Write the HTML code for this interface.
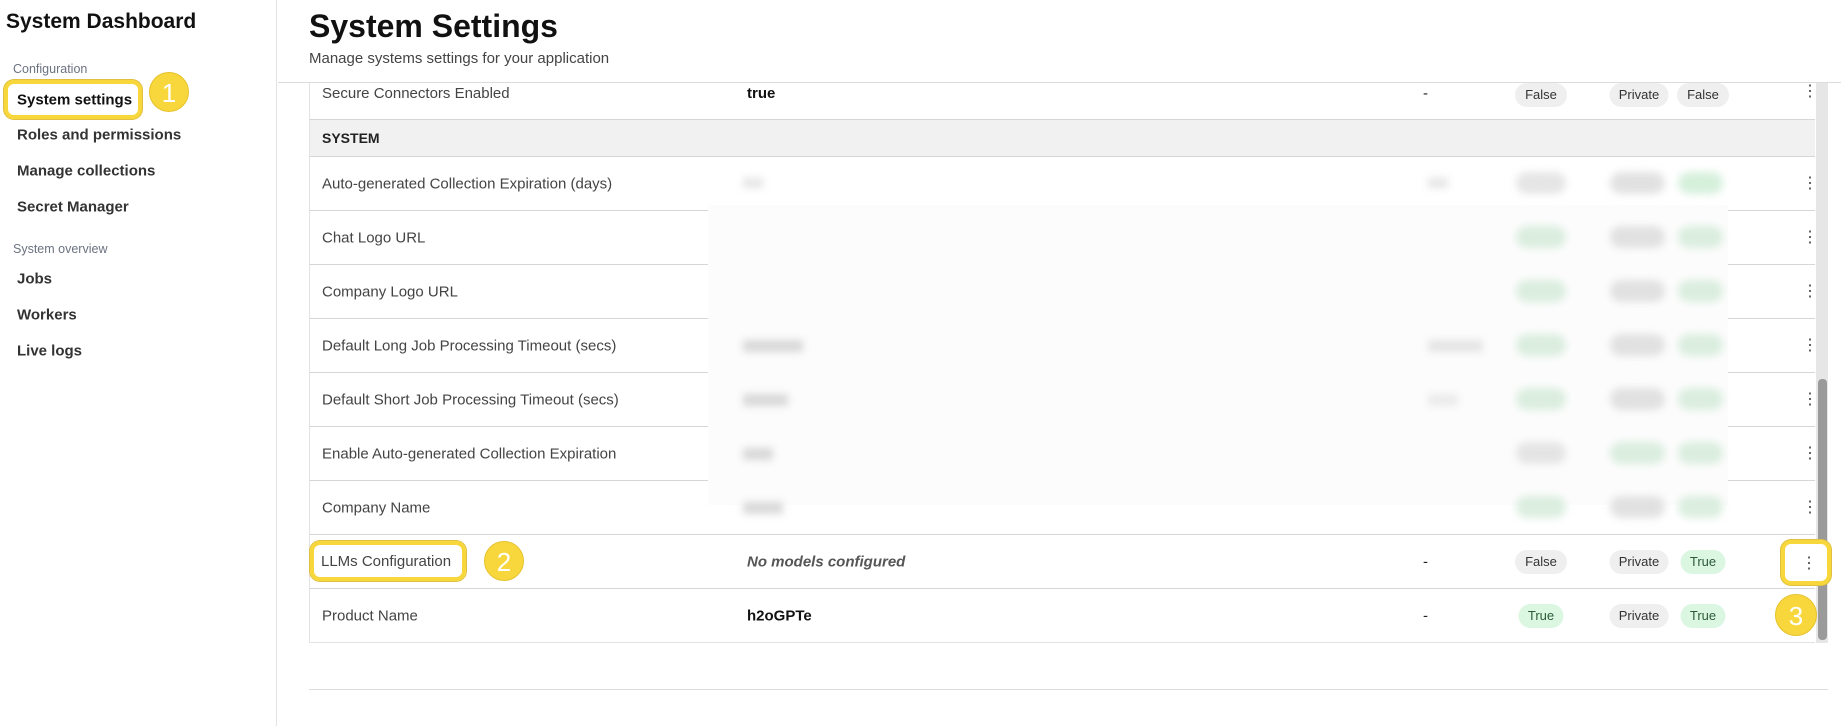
<!DOCTYPE html>
<html><head><meta charset="utf-8"><style>
*{box-sizing:border-box;margin:0;padding:0}
body{width:1841px;height:726px;overflow:hidden;background:#fff;font-family:"Liberation Sans",sans-serif;color:#222;position:relative}
.abs{position:absolute}
.side{left:0;top:0;width:277px;height:726px;border-right:1px solid #e3e3e3}
.nav{position:absolute;left:17px;font-size:15px;font-weight:bold;color:#333;transform:translateY(-50%)}
.sec{position:absolute;left:13px;font-size:12.5px;color:#6b7280;transform:translateY(-50%)}
.circ{position:absolute;width:40px;height:40px;border-radius:50%;background:#f8d73c;color:#fff;font-size:26px;text-align:center;line-height:40px;border:1px solid #e6c22c}
.hl{position:absolute;border:4px solid #f8d73c;border-radius:10px;box-shadow:0 0 0 1px #e0c040}
.row{position:absolute;left:309px;width:1506px;height:54px;border-bottom:1px solid #d6d6d6;border-left:1px solid #e3e3e3}
.c{position:absolute;top:50%;transform:translateY(-50%);font-size:15px;white-space:nowrap}
.pill{position:absolute;top:50%;height:24px;line-height:24px;border-radius:12px;font-size:13px;text-align:center;transform:translate(-50%,-50%);background:#efefef;color:#333}
.g{background:#dbf7e2;color:#2d5a38}
.dots{position:absolute;left:1492px;top:50%;transform:translateY(-50%);font-size:16px;color:#444;line-height:1}
.bp{position:absolute;height:22px;border-radius:11px}
</style></head><body>
<div class="abs side"></div>
<div class="abs" style="left:6px;top:10px;font-size:21px;font-weight:bold;color:#111">System Dashboard</div>
<div class="sec" style="top:69px">Configuration</div>
<div class="hl" style="left:4px;top:80px;width:138px;height:39px;background:#fff"></div>
<div class="nav" style="top:100px;color:#111">System settings</div>
<div class="circ" style="left:149px;top:72px">1</div>
<div class="nav" style="top:135px">Roles and permissions</div>
<div class="nav" style="top:171px">Manage collections</div>
<div class="nav" style="top:207px">Secret Manager</div>
<div class="sec" style="top:249px">System overview</div>
<div class="nav" style="top:279px">Jobs</div>
<div class="nav" style="top:315px">Workers</div>
<div class="nav" style="top:351px">Live logs</div>

<div class="abs" style="left:309px;top:8px;font-size:32px;font-weight:bold;color:#111">System Settings</div>
<div class="abs" style="left:309px;top:50px;font-size:15px;color:#444">Manage systems settings for your application</div>
<div class="abs" style="left:278px;top:82px;width:1563px;border-top:1px solid #dcdcdc"></div>

<div class="row" style="top:83px;height:37px"><span class="c" style="left:12px;top:2px;transform:none;color:#444">Secure Connectors Enabled</span><span class="c" style="left:437px;top:2px;transform:none;font-weight:bold;color:#111">true</span><span class="c" style="left:1113px;top:2px;transform:none">-</span>
<span class="pill" style="left:1231px;top:0px;transform:translateX(-50%);width:52px">False</span><span class="pill" style="left:1329px;top:0px;transform:translateX(-50%);width:59px">Private</span><span class="pill" style="left:1393px;top:0px;transform:translateX(-50%);width:52px">False</span><span class="dots" style="top:1px;transform:none">⋮</span></div>
<div class="row" style="top:120px;height:37px;background:#f1f1f1"><span class="c" style="left:12px;font-weight:bold;font-size:14px;color:#222">SYSTEM</span></div>

<div class="row" style="top:157px"><span class="c" style="left:12px;color:#444">Auto-generated Collection Expiration (days)</span><span class="dots">⋮</span></div>
<div class="row" style="top:211px"><span class="c" style="left:12px;color:#444">Chat Logo URL</span><span class="dots">⋮</span></div>
<div class="row" style="top:265px"><span class="c" style="left:12px;color:#444">Company Logo URL</span><span class="dots">⋮</span></div>
<div class="row" style="top:319px"><span class="c" style="left:12px;color:#444">Default Long Job Processing Timeout (secs)</span><span class="dots">⋮</span></div>
<div class="row" style="top:373px"><span class="c" style="left:12px;color:#444">Default Short Job Processing Timeout (secs)</span><span class="dots">⋮</span></div>
<div class="row" style="top:427px"><span class="c" style="left:12px;color:#444">Enable Auto-generated Collection Expiration</span><span class="dots">⋮</span></div>
<div class="row" style="top:481px"><span class="c" style="left:12px;color:#444">Company Name</span><span class="dots">⋮</span></div>

<div class="abs" style="left:708px;top:205px;width:1020px;height:300px;background:#fcfcfc"></div>
<div class="abs" style="left:708px;top:170px;width:1020px;height:345px;filter:blur(4px);opacity:.75">
  <div class="abs" style="left:35px;top:8px;width:20px;height:10px;background:#ddd"></div>
  <div class="abs" style="left:720px;top:8px;width:20px;height:10px;background:#ddd"></div>
  <div class="abs" style="left:35px;top:170px;width:60px;height:12px;background:#ccc"></div>
  <div class="abs" style="left:720px;top:170px;width:55px;height:12px;background:#ddd"></div>
  <div class="abs" style="left:35px;top:224px;width:45px;height:12px;background:#ccc"></div>
  <div class="abs" style="left:720px;top:224px;width:30px;height:12px;background:#e5e5e5"></div>
  <div class="abs" style="left:35px;top:278px;width:30px;height:12px;background:#ccc"></div>
  <div class="abs" style="left:35px;top:332px;width:40px;height:12px;background:#ccc"></div>

  <div class="bp" style="left:808px;top:2px;width:50px;background:#ddd"></div>
  <div class="bp" style="left:902px;top:2px;width:55px;background:#d8d8d8"></div>
  <div class="bp" style="left:970px;top:2px;width:45px;background:#c8ebd0"></div>
  <div class="bp" style="left:808px;top:56px;width:50px;background:#cfe9d5"></div>
  <div class="bp" style="left:902px;top:56px;width:55px;background:#d8d8d8"></div>
  <div class="bp" style="left:970px;top:56px;width:45px;background:#cfe9d5"></div>
  <div class="bp" style="left:808px;top:110px;width:50px;background:#cfe9d5"></div>
  <div class="bp" style="left:902px;top:110px;width:55px;background:#d8d8d8"></div>
  <div class="bp" style="left:970px;top:110px;width:45px;background:#cfe9d5"></div>
  <div class="bp" style="left:808px;top:164px;width:50px;background:#cfe9d5"></div>
  <div class="bp" style="left:902px;top:164px;width:55px;background:#d8d8d8"></div>
  <div class="bp" style="left:970px;top:164px;width:45px;background:#cfe9d5"></div>
  <div class="bp" style="left:808px;top:218px;width:50px;background:#cfe9d5"></div>
  <div class="bp" style="left:902px;top:218px;width:55px;background:#d8d8d8"></div>
  <div class="bp" style="left:970px;top:218px;width:45px;background:#cfe9d5"></div>
  <div class="bp" style="left:808px;top:272px;width:50px;background:#ddd"></div>
  <div class="bp" style="left:902px;top:272px;width:55px;background:#cfe9d5"></div>
  <div class="bp" style="left:970px;top:272px;width:45px;background:#cfe9d5"></div>
  <div class="bp" style="left:808px;top:326px;width:50px;background:#cfe9d5"></div>
  <div class="bp" style="left:902px;top:326px;width:55px;background:#d8d8d8"></div>
  <div class="bp" style="left:970px;top:326px;width:45px;background:#cfe9d5"></div>
</div>

<div class="row" style="top:535px"><span class="c" style="left:437px;font-style:italic;font-weight:bold;color:#555">No models configured</span><span class="c" style="left:1113px">-</span>
<span class="pill" style="left:1231px;width:52px">False</span><span class="pill" style="left:1329px;width:59px">Private</span><span class="pill g" style="left:1393px;width:45px">True</span></div>
<div class="row" style="top:589px;border-bottom:1px solid #e3e3e3"><span class="c" style="left:12px;color:#444">Product Name</span><span class="c" style="left:437px;font-weight:bold;color:#111">h2oGPTe</span><span class="c" style="left:1113px">-</span>
<span class="pill g" style="left:1231px;width:45px">True</span><span class="pill" style="left:1329px;width:59px">Private</span><span class="pill g" style="left:1393px;width:45px">True</span></div>

<div class="hl" style="left:310px;top:541px;width:156px;height:40px"></div>
<span class="abs" style="left:321px;top:553px;font-size:15px;color:#444">LLMs Configuration</span>
<div class="circ" style="left:484px;top:541px">2</div>

<div class="abs" style="left:1816px;top:83px;width:12px;height:560px;background:#e6e6e6"></div>
<div class="abs" style="left:1818px;top:379px;width:9px;height:261px;background:#9a9a9a;border-radius:4px"></div>

<div class="hl" style="left:1781px;top:540px;width:50px;height:45px;background:#fff"></div>
<span class="abs" style="left:1801px;top:553px;font-size:16px;color:#444">⋮</span>
<div class="circ" style="left:1775px;top:594px;width:42px;height:42px;line-height:42px">3</div>

<div class="abs" style="left:309px;top:689px;width:1519px;border-top:1px solid #dcdcdc"></div>
</body></html>
